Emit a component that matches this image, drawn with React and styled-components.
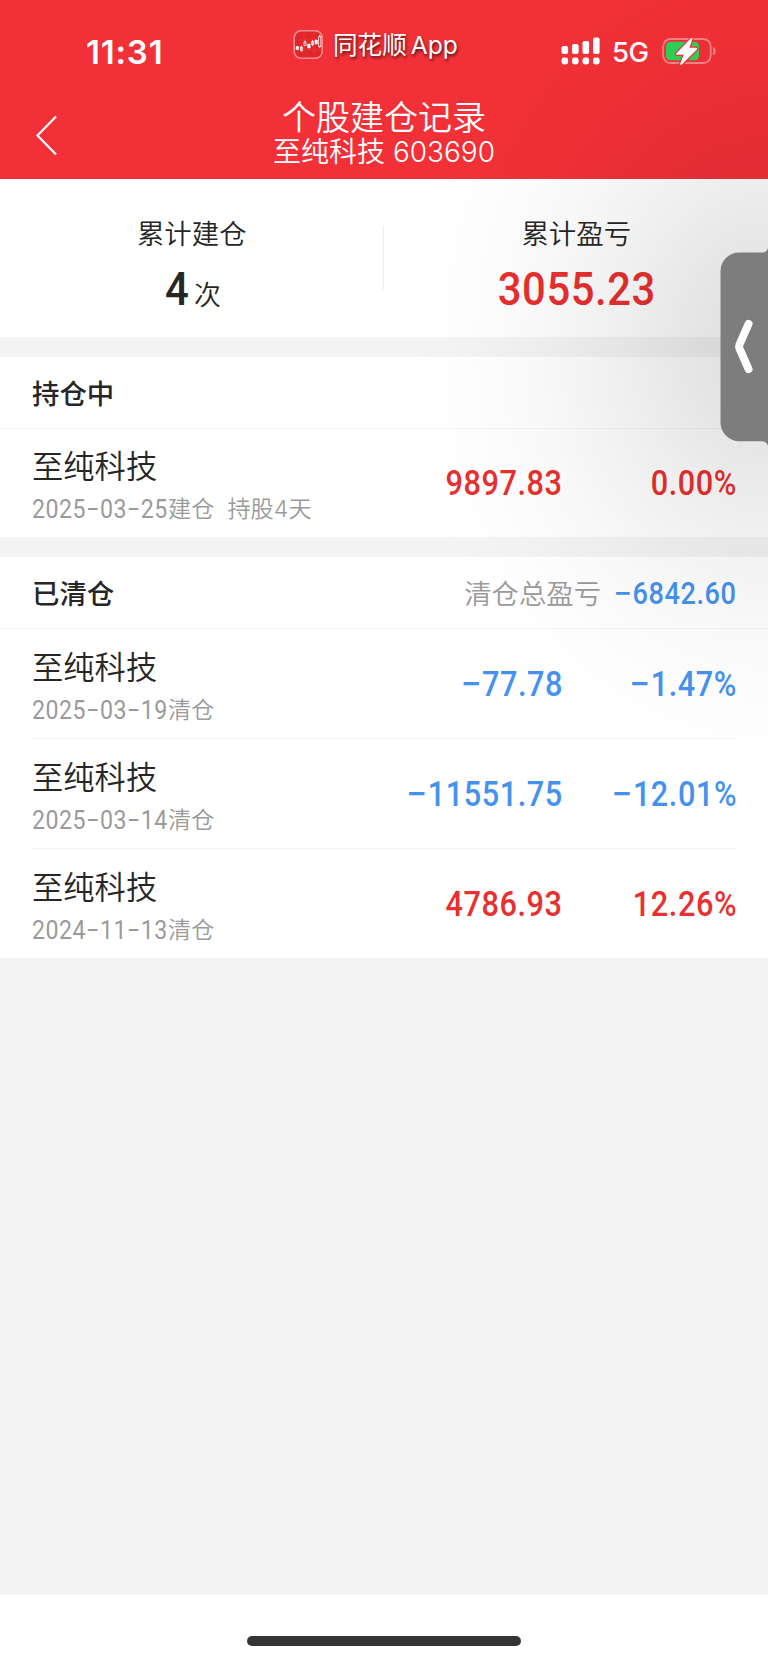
import React from 'react';
import styled, { createGlobalStyle } from 'styled-components';

const RED = '#e92f2f';
const BLUE = '#4592ee';
const GREY = '#9a9a9a';
const INK = '#262626';

const GlobalStyle = createGlobalStyle`
  * {
    box-sizing: border-box;
  }
  body {
    margin: 0;
    background-color: #f4f4f4;
    font-family: Inter, "Noto Sans CJK SC", sans-serif;
    color: ${INK};
  }
`;

const Screen = styled.div`
  position: relative;
  display: flex;
  flex-direction: column;
  width: 768px;
  height: 1663px;
  overflow: hidden;
`;

const Header = styled.header`
  height: 179px;
  background-color: #f23037;
  color: #fff;
`;

const StatusBar = styled.div`
  display: grid;
  grid-template-columns: 293px 1fr 208px;
  height: 96px;
`;

const Clock = styled.div`
  padding: 33px 0 0 86px;
  font-size: 33px;
  line-height: 38px;
  font-weight: 600;
  letter-spacing: 0.8px;
`;

const Brand = styled.div`
  display: flex;
  align-items: flex-start;
  padding-top: 29px;
`;

const BrandName = styled.div`
  margin: 1px 0 0 9px;
  font-size: 24.6px;
  line-height: 30px;
  word-spacing: -3px;
  white-space: nowrap;
  text-shadow: 1px 2px 3px rgba(0, 0, 0, 0.65);
`;

const Signals = styled.div`
  display: flex;
  align-items: flex-start;
  padding-top: 36px;
`;

const Network = styled.div`
  margin: -1px 14px 0 12px;
  width: 36px;
  font-size: 27.5px;
  line-height: 34px;
  font-weight: 500;
  letter-spacing: -0.5px;
  white-space: nowrap;
`;

const NavBar = styled.div`
  display: grid;
  grid-template-columns: 96px 1fr 96px;
`;

const BackButton = styled.button`
  margin: 18px 0 0 34px;
  padding: 0;
  width: 26px;
  height: 44px;
  border: 0;
  background: none;
  color: #fff;
`;

const Titles = styled.div`
  text-align: center;
`;

const Title = styled.h1`
  margin: 2px 0 0;
  font-size: 34px;
  line-height: 40px;
  font-weight: 350;
`;

const Subtitle = styled.div`
  margin-top: -1px;
  font-size: 28px;
  line-height: 30px;
  font-weight: 350;
`;

const Panel = styled.section`
  margin-bottom: 20px;
  background-color: #fff;
`;

const Summary = styled(Panel)`
  display: flex;
  height: 158px;
  align-items: flex-start;
`;

const SummaryCell = styled.div`
  flex: 1;
  padding-top: 37px;
  text-align: center;
`;

const SummaryLabel = styled.div`
  font-size: 27.4px;
  line-height: 36px;
  font-weight: 350;
`;

const SummaryValue = styled.div`
  display: flex;
  justify-content: center;
  align-items: baseline;
  gap: 5px;
  height: 60px;
  line-height: 60px;
  margin-top: 7px;
  font-size: 27px;
  font-weight: 350;
`;

const Separator = styled.div`
  width: 1px;
  height: 64px;
  margin: 47px 1px 0 -1px;
  background-color: #ececec;
`;

// figures are set condensed, with a little air between the digits
const Figure = styled.span`
  display: inline-block;
  margin-right: -0.6px;
  font-family: Roboto, sans-serif;
  font-size: ${p => p.$size || 34.5}px;
  font-weight: 500;
  letter-spacing: 0.6px;
  color: ${p => p.$color || INK};
  transform: scaleX(0.89);
  transform-origin: ${p => p.$origin || 'right'} center;
  white-space: nowrap;
`;

const MinusSign = styled.span`
  display: inline-block;
  margin-right: 2px;
  transform: scaleX(1.2);
`;

const SectionHead = styled.div`
  display: flex;
  align-items: center;
  height: 72px;
  padding: 0 32px 2px;
  border-bottom: 1px solid #f4f4f4;
`;

const SectionTitle = styled.h2`
  margin: 0 auto 0 0;
  font-size: 27.4px;
  font-weight: 500;
`;

const SectionNote = styled.span`
  margin-right: -1px;
  font-size: 27.4px;
  font-weight: 350;
  color: ${GREY};
`;

const SectionFigure = styled(Figure)`
  margin-top: 4px;
`;

const Row = styled.div`
  display: grid;
  grid-template-columns: 1fr 240px 174px;
  align-items: center;
  height: ${p => p.$height || 110}px;
  margin: 0 32px;
  border-bottom: ${p => (p.$last ? 0 : 1)}px solid #f4f4f4;
`;

const Stock = styled.div`
  padding-top: 8px;
`;

const StockName = styled.div`
  font-size: 31.3px;
  line-height: 42px;
  font-weight: 350;
`;

const StockMeta = styled.div`
  display: flex;
  font-size: 23.2px;
  line-height: 36px;
  margin-top: 3px;
  font-weight: 350;
  color: ${GREY};
  white-space: pre;
`;

const DateBox = styled.span`
  width: 136px;
`;

const DateText = styled(Figure)`
  font-size: 26px;
  font-weight: 400;
  color: ${GREY};
`;

const Cell = styled.div`
  text-align: right;
`;

const Filler = styled.div`
  flex: 1;
`;

const HomeArea = styled.footer`
  display: flex;
  justify-content: center;
  height: 68px;
  padding-top: 41px;
  background-color: #fff;
`;

const HomeBar = styled.div`
  width: 274px;
  height: 10px;
  border-radius: 5px;
  background-color: #353535;
`;

const Shade = styled.div`
  position: absolute;
  inset: 0;
  pointer-events: none;
  background: radial-gradient(
    370px 450px at 768px 345px,
    rgba(0, 0, 0, 0.12) 0%,
    rgba(0, 0, 0, 0.105) 18%,
    rgba(0, 0, 0, 0.062) 40%,
    rgba(0, 0, 0, 0.028) 62%,
    rgba(0, 0, 0, 0.007) 82%,
    rgba(0, 0, 0, 0) 100%
  );
`;

const SideHandle = styled.div`
  position: absolute;
  top: 244px;
  right: 0;
  width: 48px;
  height: 206px;
`;

const records = [
  { date: '2025−03−19', profit: '−77.78', rate: '−1.47%' },
  { date: '2025−03−14', profit: '−11551.75', rate: '−12.01%' },
  { date: '2024−11−13', profit: '4786.93', rate: '12.26%' },
];

const isLoss = value => value.startsWith('−');

const AppLogo = () => (
  <svg width="31" height="31" viewBox="0 0 31 31" fill="none">
    <rect x="1.2" y="1.7" width="28" height="27.6" rx="7" fill="#e0262a" stroke="#fa8d8f" strokeWidth="1.6" />
    <path d="M11 3v26M21 3v26M2 11h26M2 21h26" stroke="#ea4246" strokeWidth="0.5" />
    <path d="M3 17.5h2.6v3H3zM14.6 15h2.6v4h-2.6zM22 11h2.4v4H22z" fill="#fff" stroke="#fff" strokeWidth="0.5" />
    <path d="M7.4 18h2v3.5h-2zM11 13h2v3.6h-2zM18.6 12.5h2v3h-2zM25.6 7.5h2.2v10h-2.2zM8.4 16.5V23M12 11.5V13M19.6 11v6M26.7 5.5v2M26.7 17.5V19" stroke="#fff" strokeWidth="0.8" />
  </svg>
);

const SignalIcon = () => (
  <svg width="40" height="30" viewBox="0 0 40 30" fill="#fff">
    <rect x="1.5" y="10" width="6.6" height="8" rx="2" />
    <rect x="12" y="8" width="6.6" height="10" rx="2" />
    <rect x="22.5" y="5" width="6.6" height="13" rx="2" />
    <rect x="33" y="1.5" width="6.6" height="16.5" rx="2" />
    {[1.5, 12, 22.5, 33].map(x => (
      <rect key={x} x={x} y="21.5" width="6.6" height="7" rx="2.4" />
    ))}
  </svg>
);

const BatteryIcon = () => (
  <svg width="56" height="32" viewBox="0 0 56 32">
    <rect x="1.2" y="3" width="47.5" height="24" rx="7.5" fill="none" stroke="#f98388" strokeWidth="1.8" />
    <path d="M51 11c3.6 1.2 3.6 7.3 0 8.5z" fill="#f98388" />
    <rect x="4" y="5.8" width="33" height="18.4" rx="4.5" fill="#30d158" />
    <path
      d="M28.8 2.3 14.4 17.2c-.7.8-.3 1.6.6 1.6h6.6l-3.4 9c-.3 1.2.8 1.6 1.6.8L34.9 13.5c.7-.8.3-1.7-.7-1.7h-6.8l3-8.6c.3-1.2-.8-1.7-1.6-.9z"
      fill="#fff"
      stroke="#f23037"
      strokeWidth="2.4"
      paintOrder="stroke"
    />
  </svg>
);

const Handle = () => (
  <SideHandle>
    <svg width="48" height="206" viewBox="0 0 48 206" fill="none">
      <path d="M48 4Q46.5 8.500 42 8.500H19A18.500 18.500 0 0 0 .5 27V178A19 19 0 0 0 20 197.300H42Q46.500 197.300 48 202Z" fill="#7e7d7d" />
      <path d="M28.500 80 19.500 100.500Q18.800 102.500 19.500 104.500L28.500 125" stroke="#fff" strokeWidth="8" strokeLinecap="round" strokeLinejoin="round" />
    </svg>
  </SideHandle>
);

const Signed = ({ value }) => (
  <>
    {!isLoss(value) ? null : <MinusSign>−</MinusSign>}
    {value.replace('−', '')}
  </>
);

const Record = ({ date, action, extra, profit, rate, last, height }) => (
  <Row $last={last} $height={height}>
    <Stock>
      <StockName>至纯科技</StockName>
      <StockMeta>
        <DateBox>
          <DateText $origin="left">{date}</DateText>
        </DateBox>
        {action}
        {extra}
      </StockMeta>
    </Stock>
    <Cell>
      <Figure $color={isLoss(profit) ? BLUE : RED}>
        <Signed value={profit} />
      </Figure>
    </Cell>
    <Cell>
      <Figure $color={isLoss(rate) ? BLUE : RED}>
        <Signed value={rate} />
      </Figure>
    </Cell>
  </Row>
);

export default function App() {
  return (
    <>
      <GlobalStyle />
      <Screen>
        <Header>
          <StatusBar>
            <Clock>11:31</Clock>
            <Brand>
              <AppLogo />
              <BrandName>同花顺 App</BrandName>
            </Brand>
            <Signals>
              <SignalIcon />
              <Network>5G</Network>
              <BatteryIcon />
            </Signals>
          </StatusBar>
          <NavBar>
            <BackButton>
              <svg width="26" height="44" viewBox="0 0 26 44" fill="none">
                <path d="M22 2.500 3.500 21.500 22 40.500" stroke="#fff" strokeWidth="2.200" />
              </svg>
            </BackButton>
            <Titles>
              <Title>个股建仓记录</Title>
              <Subtitle>至纯科技 603690</Subtitle>
            </Titles>
          </NavBar>
        </Header>
        <Summary>
          <SummaryCell>
            <SummaryLabel>累计建仓</SummaryLabel>
            <SummaryValue>
              <Figure $size={47}>4</Figure>次
            </SummaryValue>
          </SummaryCell>
          <Separator />
          <SummaryCell>
            <SummaryLabel>累计盈亏</SummaryLabel>
            <SummaryValue>
              <Figure $size={47} $color={RED} $origin="center">3055.23</Figure>
            </SummaryValue>
          </SummaryCell>
        </Summary>
        <Panel>
          <SectionHead>
            <SectionTitle>持仓中</SectionTitle>
          </SectionHead>
          <Record date="2025−03−25" action="建仓" extra="  持股4天" profit="9897.83" rate="0.00%" last height={108} />
        </Panel>
        <Panel>
          <SectionHead>
            <SectionTitle>已清仓</SectionTitle>
            <SectionNote>清仓总盈亏</SectionNote>
            <SectionFigure $size={30.5} $color={BLUE}>
              <Signed value="−6842.60" />
            </SectionFigure>
          </SectionHead>
          {records.map((item, i) => {
            const last = i === records.length - 1;
            return <Record key={item.date} {...item} action="清仓" last={last} height={last ? 109 : 110} />;
          })}
        </Panel>
        <Filler />
        <HomeArea>
          <HomeBar />
        </HomeArea>
        <Shade />
        <Handle />
      </Screen>
    </>
  );
}
